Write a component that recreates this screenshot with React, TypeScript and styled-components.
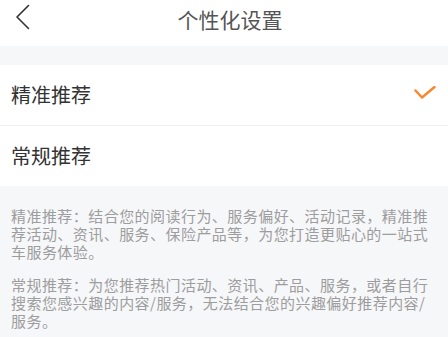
import styled, { createGlobalStyle } from "styled-components"

const GlobalStyle = createGlobalStyle`
  html, body {
    margin: 0;
    padding: 0;
    background: #f6f7f9;
  }
  body {
    font-family: "Noto Sans CJK SC", "Noto Sans", sans-serif;
  }
`

type Option = {
  label: string
  checked?: boolean
}

const options: Option[] = [
  { label: "精准推荐", checked: true },
  { label: "常规推荐" },
]

const notes = [
  "精准推荐：结合您的阅读行为、服务偏好、活动记录，精准推荐活动、资讯、服务、保险产品等，为您打造更贴心的一站式车服务体验。",
  "常规推荐：为您推荐热门活动、资讯、产品、服务，或者自行搜索您感兴趣的内容/服务，无法结合您的兴趣偏好推荐内容/服务。",
]

export const App = () => {
  return (
    <Page>
      <GlobalStyle />
      <Header>
        <BackButton>
          <svg width="16" height="26" viewBox="0 0 16 26" fill="none">
            <path d="M13.5 1.5 L2 13 L13.5 24.5" stroke="#333" strokeWidth="1.6" strokeLinecap="round" strokeLinejoin="round" />
          </svg>
        </BackButton>
        <Title>个性化设置</Title>
      </Header>
      <Spacer />
      <List>
        {options.map((o) => (
          <Row key={o.label}>
            <Label>{o.label}</Label>
            {o.checked && (
              <svg width="22" height="16" viewBox="0 0 22 16" fill="none">
                <path d="M1.5 4.5 L8 11.5 L20.5 1" stroke="#f7862f" strokeWidth="2.4" strokeLinecap="round" strokeLinejoin="round" />
              </svg>
            )}
          </Row>
        ))}
      </List>
      <Notes>
        {notes.map((n) => (
          <Note key={n}>{n}</Note>
        ))}
      </Notes>
    </Page>
  )
}
export default App

const Page = styled.div`
  width: 448px;
  min-height: 337px;
  display: flex;
  flex-direction: column;
  background: #f6f7f9;
`

const Header = styled.div`
  height: 46px;
  background: #fff;
  display: flex;
  align-items: center;
  position: relative;
`

const BackButton = styled.div`
  position: absolute;
  left: 15px;
  top: 4px;
  width: 16px;
  height: 26px;
  display: flex;
`

const Title = styled.div`
  flex: 1;
  text-align: center;
  padding-left: 12px;
  margin-top: -9px;
  font-size: 21px;
  color: #555;
  line-height: 24px;
`

const Spacer = styled.div`
  height: 19px;
`

const List = styled.div`
  background: #fff;
  display: flex;
  flex-direction: column;
`

const Row = styled.div`
  height: 60px;
  padding: 0 12px 0 11px;
  display: flex;
  align-items: center;
  justify-content: space-between;
  & + & {
    border-top: 1px solid #eeeeee;
  }
  svg {
    margin-top: -2px;
  }
`

const Label = styled.span`
  font-size: 20px;
  color: #333;
  line-height: 24px;
  margin-top: -1px;
`

const Notes = styled.div`
  padding: 21px 11px 0 11px;
  display: flex;
  flex-direction: column;
  gap: 16px;
`

const Note = styled.p`
  margin: 0;
  font-size: 15px;
  letter-spacing: 0.45px;
  line-height: 17.8px;
  color: #9d9d9d;
`
